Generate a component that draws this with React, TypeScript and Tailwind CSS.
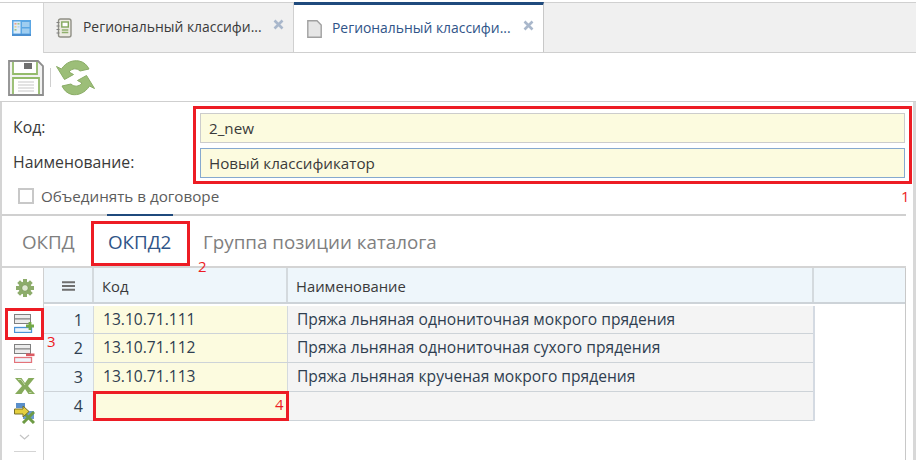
import React from "react";

const font = { fontFamily: '"Open Sans","Noto Sans",sans-serif' };

function X() {
  return (
    <svg width="11" height="11" viewBox="0 0 11 11" className="shrink-0">
      <path d="M1.5 1.5L9.5 9.5M9.5 1.5L1.5 9.5" stroke="#a9b7cb" strokeWidth="2.6" />
    </svg>
  );
}

function HomeIcon() {
  return (
    <svg width="19" height="16" viewBox="0 0 19 16" className="shrink-0">
      <rect x="0" y="0" width="19" height="16" fill="#5aa6e4" />
      <rect x="0" y="14" width="19" height="2" fill="#4b8fd0" />
      <rect x="1.5" y="1.5" width="7" height="12" fill="#dcebf8" />
      <rect x="10" y="2" width="7.5" height="5" fill="#9fcdf0" />
      <rect x="10" y="8.5" width="7.5" height="5" fill="#9fcdf0" />
      <rect x="2.5" y="3" width="2" height="1.6" fill="#e8a08c" />
      <rect x="5.5" y="3" width="2" height="1.6" fill="#9cc88c" />
      <rect x="2.5" y="6" width="2" height="1.6" fill="#e8d28c" />
      <rect x="5.5" y="6" width="2" height="1.6" fill="#b8d4ec" />
      <rect x="2.5" y="9" width="2" height="1.6" fill="#9cc88c" />
    </svg>
  );
}

function BookIcon() {
  return (
    <svg width="16" height="20" viewBox="0 0 16 20" className="shrink-0">
      <rect x="2.5" y="1" width="12.5" height="18" rx="2" fill="#ecebe2" stroke="#8f8f85" strokeWidth="1.4" />
      <path d="M0.5 4.5h3M0.5 8h3M0.5 11.5h3M0.5 15h3" stroke="#808080" strokeWidth="1.2" />
      <rect x="5.8" y="4" width="6.5" height="5" fill="#fff" stroke="#83a75d" strokeWidth="1.4" />
      <path d="M5.8 12h6.5M5.8 14.5h6.5" stroke="#8fb06c" strokeWidth="1.3" />
    </svg>
  );
}

function DocIcon() {
  return (
    <svg width="15" height="18" viewBox="0 0 15 18" className="shrink-0">
      <path d="M0.8 0.8H10L14.2 5V17.2H0.8Z" fill="#e6e6e6" stroke="#a0a0a0" strokeWidth="1.4" />
    </svg>
  );
}

function SaveIcon() {
  return (
    <svg width="36" height="36" viewBox="0 0 36 36" className="shrink-0">
      <path d="M1 1H30L35 6V35H1Z" fill="#f2f2f2" stroke="#8e8e8e" strokeWidth="1.8" />
      <path d="M5 2V14H29V2" fill="#fff" stroke="#94bb6b" strokeWidth="1.8" />
      <rect x="16" y="3" width="8" height="6" fill="#6f6f6f" />
      <path d="M5 34V18H31V34" fill="#fff" stroke="#94bb6b" strokeWidth="1.8" />
      <path d="M10 22H26M10 25H26M10 28H26M10 31H26" stroke="#c8c8c8" strokeWidth="1.2" />
    </svg>
  );
}

function RefreshIcon() {
  return (
    <svg width="39" height="36" viewBox="0 0 39 36" className="shrink-0">
      <path d="M8.5 19.5L0.5 6.5L5.5 9C10 2 17 0 23 1C28 2 31 5 33 9L24 11C21 8 16 8 13 12L17.5 14.5Z" fill="#9cbe78" stroke="#8aac66" />
      <path d="M30.5 15.5L38.5 28.5L33.5 26C29 33 22 35.5 16 34.5C11 33.5 8 30 6 26L15 24C18 27 23 27 26 23L21.5 20.5Z" fill="#9cbe78" stroke="#8aac66" />
    </svg>
  );
}

function GearIcon() {
  return (
    <svg width="18" height="18" viewBox="0 0 18 18" className="shrink-0">
      <g fill="#8dac6b">
        <circle cx="9" cy="9" r="6.5" />
        {[0, 45, 90, 135].map((a) => (
          <rect key={a} x="7" y="0" width="4" height="18" transform={`rotate(${a} 9 9)`} />
        ))}
      </g>
      <circle cx="9" cy="9" r="3.4" fill="#dfe8d3" stroke="#7a9a58" />
    </svg>
  );
}

function AddRow({ minus }: { minus?: boolean }) {
  const c = minus ? "#e4737a" : "#4a93d6";
  return (
    <svg width="21" height="20" viewBox="0 0 21 20" className="shrink-0">
      <rect x="0.5" y="1.5" width="16" height="4.5" fill="#ececec" stroke="#808080" />
      <rect x="0.5" y="6" width="16" height="4.5" fill="#ececec" stroke="#808080" />
      <rect x="0.5" y="14.5" width="17" height="5" fill="#eef5fb" stroke={c} strokeWidth="1.3" />
      {minus ? (
        <rect x="12" y="10.5" width="8.5" height="2.6" fill="#dc5a62" />
      ) : (
        <path d="M16 9V17M12 13H20" stroke="#74a845" strokeWidth="2.8" />
      )}
    </svg>
  );
}

function ExcelIcon() {
  return (
    <svg width="20" height="16" viewBox="0 0 20 16" className="shrink-0">
      <path d="M0 0H6.5L10 5L13.5 0H19.5L13 8L20 16H13.5L10 11L6.5 16H0L7 8Z" fill="#86ab5c" />
      <path d="M3 1.5H6L10 7M16.5 14.5H14" stroke="#c4d8ab" strokeWidth="1" fill="none" />
    </svg>
  );
}

function ImportIcon() {
  return (
    <svg width="21" height="21" viewBox="0 0 21 21" className="shrink-0">
      <rect x="2" y="0" width="9" height="5" fill="#5a8fca" />
      <rect x="9" y="8" width="11" height="8" fill="#6a9ad0" />
      <path d="M9 9L20 20M20 9L9 20" stroke="#6e9b45" strokeWidth="3" />
      <path d="M0.5 6H9V3L15 8.5L9 14V11H0.5Z" fill="#e5cf3f" stroke="#77702a" />
    </svg>
  );
}

function Chevron() {
  return (
    <svg width="11" height="6" viewBox="0 0 11 6" className="shrink-0">
      <path d="M1 1L5.5 5L10 1" fill="none" stroke="#c4c4c4" strokeWidth="1.2" />
    </svg>
  );
}

function Burger() {
  return (
    <svg width="13" height="10" viewBox="0 0 13 10" className="shrink-0">
      <path d="M0 1.2H13M0 5H13M0 8.8H13" stroke="#6f6f6f" strokeWidth="2" />
    </svg>
  );
}

const rows = [
  { n: "1", code: "13.10.71.111", name: "Пряжа льняная однониточная мокрого прядения", h: "h-[28px]" },
  { n: "2", code: "13.10.71.112", name: "Пряжа льняная однониточная сухого прядения", h: "h-[29px]" },
  { n: "3", code: "13.10.71.113", name: "Пряжа льняная крученая мокрого прядения", h: "h-[29px]" },
  { n: "4", code: "", name: "", h: "h-[29px]" },
];

export default function App() {
  return (
    <div
      className="relative w-[916px] h-[460px] overflow-hidden bg-white text-[15.2px] text-[#3a3a3a] flex flex-col"
      style={font}
    >
      {/* Tabs */}
      <div className="h-[51px] mt-[2px] border-t border-t-[#d0d0d0] border-b border-b-[#cfcfcf] bg-[#f0f0f0] flex shrink-0 text-[13.9px]">
        <div className="w-[44px] h-[50px] bg-white border-r border-[#d4d4d4] flex items-center justify-center">
          <HomeIcon />
        </div>
        <div className="w-[250px] flex items-center pl-[12px] pr-[9px] gap-[11px] border-r border-[#d0d0d0]">
          <BookIcon />
          <span className="flex-1 whitespace-nowrap">Региональный классифи...</span>
          <span className="relative -top-[3px]"><X /></span>
        </div>
        <div className="w-[250px] h-[50px] -mt-px bg-white border-t-[3px] border-t-[#1f4a7d] border-r border-r-[#c8c8c8] flex items-center pl-[13px] pr-[9px] gap-[10px] text-[#2f5488]">
          <DocIcon />
          <span className="flex-1 whitespace-nowrap">Региональный классифи...</span>
          <span className="relative -top-[3px]"><X /></span>
        </div>
        <div className="flex-1" />
      </div>

      {/* Toolbar */}
      <div className="h-[49px] shrink-0 flex items-center pl-[8px] pt-[1px] gap-[5px] border-b border-[#cfcfcf]">
        <SaveIcon />
        <div className="w-px h-[19px] bg-[#cfcfcf] ml-[1px]" />
        <RefreshIcon />
      </div>

      <div className="flex-1 flex min-h-0">
        <div className="flex-1 min-w-0 flex flex-col border-l-2 border-[#d4d4d4] pr-[7px]">
          {/* Form */}
          <div className="flex flex-col pl-[11px] pr-[1px] pt-[11px] gap-[5px]">
            <div className="flex items-center h-[30px]">
              <div className="w-[187px] text-[15.8px] leading-none">Код:</div>
              <div className="flex-1 h-[30px] bg-[#fcfbdf] border border-[#cccccc] flex items-center px-[8px]">2_new</div>
            </div>
            <div className="flex items-center h-[30px]">
              <div className="w-[187px] text-[15.8px] leading-none">Наименование:</div>
              <div className="flex-1 h-[30px] bg-[#fcfbdf] border border-[#86a9cf] flex items-center px-[8px]">Новый классификатор</div>
            </div>
          </div>

          {/* Checkbox */}
          <div className="h-[38px] shrink-0 flex items-center pl-[16px] gap-[7px] text-[#5c5c5c] border-b-2 border-[#d0d0d0] relative">
            <div className="w-[16px] h-[16px] border-2 border-[#c8c8c8] bg-white" />
            <span>Объединять в договоре</span>
            <div className="absolute left-[105px] -bottom-[2px] w-[66px] h-[2px] bg-[#1f4a7d]" />
          </div>

          {/* Sub-tabs */}
          <div className="h-[52px] pt-[3px] flex items-center text-[18.8px] text-[#7f7f7f] pl-[20px] border-b-2 border-[#d4d4d4] shrink-0">
            <span className="w-[86px]">ОКПД</span>
            <span className="w-[95px] text-[#2f5488]">ОКПД2</span>
            <span>Группа позиции каталога</span>
          </div>

          {/* Grid area */}
          <div className="flex-1 flex min-h-0">
            <div className="w-[42px] border-r border-[#d0d0d0] flex flex-col items-center shrink-0 pt-[11px] pl-[4px]">
              <GearIcon />
              <div className="mt-[16px]"><AddRow /></div>
              <div className="mt-[10px]"><AddRow minus /></div>
              <div className="w-[22px] h-px bg-[#d4d4d4] mt-[6px]" />
              <div className="mt-[8px]"><ExcelIcon /></div>
              <div className="mt-[9px]"><ImportIcon /></div>
              <div className="mt-[10px]"><Chevron /></div>
              <div className="w-[22px] h-px bg-[#d4d4d4] mt-[11px]" />
            </div>
            <div className="flex-1 min-w-0 flex flex-col border-r border-[#c8c8c8]">
              <div className="h-[36px] shrink-0 flex bg-[#eef6fb] border-b-2 border-[#cdd3d8]">
                <div className="w-[50px] pt-[2px] border-r-2 border-[#d4dade] flex items-center justify-center"><Burger /></div>
                <div className="w-[194px] pt-[2px] border-r-2 border-[#d4dade] flex items-center pl-[8px] text-[14.8px]">Код</div>
                <div className="w-[526px] pt-[2px] border-r-2 border-[#d4dade] flex items-center pl-[8px] text-[14.8px]">Наименование</div>
                <div className="flex-1" />
              </div>
              <div className="w-[771px] mt-[2px] border-r-2 border-[#d4dae2]">
                {rows.map((r) => (
                  <div key={r.n} className={`${r.h} flex border-b border-[#cdd3d8] text-[#2f3e50]`}>
                    <div className="w-[50px] bg-[#eef6fb] border-r border-[#d4dade] flex items-center justify-end pr-[10px] text-[16px]">{r.n}</div>
                    <div className="w-[194px] bg-[#fcfbdf] flex items-center pl-[9px] border-r border-[#d4dade] text-[15.6px]">{r.code}</div>
                    <div className="flex-1 bg-[#f4f4f4] flex items-center pl-[9px] text-[15.6px]">{r.name}</div>
                  </div>
                ))}
              </div>
            </div>
          </div>
        </div>
        {/* right scrollbar strip */}
        <div className="w-[3px] bg-[#d8d8d8] shrink-0" />
      </div>

      {/* Annotation overlays */}
      <div className="absolute left-[193px] top-[106px] w-[719px] h-[78px] border-[3px] border-[#ed1c24]" />
      <div className="absolute left-[91px] top-[221px] w-[99px] h-[45px] border-[3px] border-[#ed1c24]" />
      <div className="absolute left-[5px] top-[308px] w-[39px] h-[32px] border-[3px] border-[#ed1c24]" />
      <div className="absolute left-[93px] top-[391px] w-[196px] h-[30px] border-[3px] border-[#ed1c24]" />
      <span className="absolute left-[901px] top-[187px] text-[#ed1c24] text-[15px] leading-[18px]">1</span>
      <span className="absolute left-[198px] top-[257px] text-[#ed1c24] text-[15px] leading-[18px]">2</span>
      <span className="absolute left-[47px] top-[332px] text-[#ed1c24] text-[15px] leading-[18px]">3</span>
      <span className="absolute left-[275px] top-[395px] text-[#ed1c24] text-[15px] leading-[18px]">4</span>
    </div>
  );
}
